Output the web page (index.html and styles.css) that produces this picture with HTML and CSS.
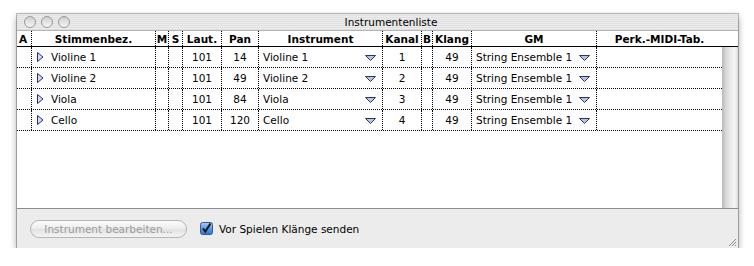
FILE: index.html
```html
<!DOCTYPE html>
<html lang="de">
<head>
    <meta charset="UTF-8">
    <title>Instrumentenliste</title>
    <link rel="stylesheet" href="styles.css">
</head>
<body>
    <div class="window">
        <div class="titlebar">
            <div class="lights">
                <span class="light"></span>
                <span class="light"></span>
                <span class="light"></span>
            </div>
            <div class="title">Instrumentenliste</div>
        </div>

        <div class="row head">
            <div class="cell c-a">A</div>
            <div class="cell c-name">Stimmenbez.</div>
            <div class="cell c-m">M</div>
            <div class="cell c-s">S</div>
            <div class="cell c-vol">Laut.</div>
            <div class="cell c-pan">Pan</div>
            <div class="cell c-inst">Instrument</div>
            <div class="cell c-chan">Kanal</div>
            <div class="cell c-b">B</div>
            <div class="cell c-prog">Klang</div>
            <div class="cell c-gm">GM</div>
            <div class="cell c-perk">Perk.-MIDI-Tab.</div>
            <div class="cell c-corner"></div>
        </div>

        <div class="list">
            <div class="rows" id="rows"></div>
            <div class="scrollbar"></div>
        </div>

        <div class="bottombar">
            <button class="btn" disabled>Instrument bearbeiten...</button>
            <label class="check">
                <svg width="13" height="13" viewBox="0 0 13 13">
                    <defs>
                        <linearGradient id="cb" x1="0" y1="0" x2="0" y2="1">
                            <stop offset="0" stop-color="#a9cdf5"/>
                            <stop offset="0.5" stop-color="#5b9be6"/>
                            <stop offset="1" stop-color="#2f74d6"/>
                        </linearGradient>
                    </defs>
                    <rect x="0.5" y="0.5" width="12" height="12" rx="2" fill="url(#cb)" stroke="#3c5a86"/>
                    <path d="M3 6.5 L5.3 9.5 L10.5 1.5" fill="none" stroke="#111" stroke-width="2"/>
                </svg>
                <span>Vor Spielen Klänge senden</span>
            </label>
            <svg class="grip" width="10" height="10" viewBox="0 0 10 10">
                <path d="M9 2 L2 9 M9 5 L5 9 M9 8 L8 9" stroke="#888" stroke-width="1"/>
            </svg>
        </div>
    </div>

    <script>
        // Zeilen der Instrumentenliste
        const staves = [
            { name: 'Violine 1', vol: 101, pan: 14, inst: 'Violine 1', chan: 1, prog: 49, gm: 'String Ensemble 1' },
            { name: 'Violine 2', vol: 101, pan: 49, inst: 'Violine 2', chan: 2, prog: 49, gm: 'String Ensemble 1' },
            { name: 'Viola', vol: 101, pan: 84, inst: 'Viola', chan: 3, prog: 49, gm: 'String Ensemble 1' },
            { name: 'Cello', vol: 101, pan: 120, inst: 'Cello', chan: 4, prog: 49, gm: 'String Ensemble 1' }
        ];

        const disclosure = '<svg class="tri" width="7" height="10" viewBox="0 0 7 10"><path d="M0.5 0.5 L6 5 L0.5 9.5 Z" fill="#d5dcf5" stroke="#2a2a6a"/></svg>';
        const popup = '<svg class="pop" width="11" height="6" viewBox="0 0 11 6"><path d="M0.5 0.5 L10.5 0.5 L5.5 5.5 Z" fill="#b7c3ee" stroke="#333355"/></svg>';

        const rows = document.getElementById('rows');
        staves.forEach(s => {
            const row = document.createElement('div');
            row.className = 'row';
            row.innerHTML =
                '<div class="cell c-a"></div>' +
                '<div class="cell c-name">' + disclosure + '<span>' + s.name + '</span></div>' +
                '<div class="cell c-m"></div>' +
                '<div class="cell c-s"></div>' +
                '<div class="cell c-vol num">' + s.vol + '</div>' +
                '<div class="cell c-pan num">' + s.pan + '</div>' +
                '<div class="cell c-inst menu"><span>' + s.inst + '</span>' + popup + '</div>' +
                '<div class="cell c-chan num">' + s.chan + '</div>' +
                '<div class="cell c-b"></div>' +
                '<div class="cell c-prog num">' + s.prog + '</div>' +
                '<div class="cell c-gm menu"><span>' + s.gm + '</span>' + popup + '</div>' +
                '<div class="cell c-perk"></div>';
            rows.appendChild(row);
        });
    </script>
</body>
</html>
```

FILE: styles.css
```css
body {
    margin: 0;
    background-color: #fff;
    font-family: 'DejaVu Sans', sans-serif;
    font-size: 10.5px;
    color: #000;
}

.window {
    margin: 14px 0 0 17px;
    width: 721px;
    height: 234px;
    display: flex;
    flex-direction: column;
    background-color: #fff;
    box-shadow: 0 0 0 1px rgba(0, 0, 0, 0.25), 0 3px 7px rgba(0, 0, 0, 0.4);
}

.titlebar {
    height: 16px;
    display: flex;
    align-items: center;
    border-bottom: 1px solid #b4b4b4;
    background: repeating-linear-gradient(to bottom, #ececec 0, #ececec 1px, #e0e0e0 1px, #e0e0e0 2px);
}

.lights {
    display: flex;
    gap: 5px;
    padding-left: 7px;
    width: 290px;
}

.light {
    width: 12px;
    height: 12px;
    border-radius: 50%;
    border: 1px solid #9a9a9a;
    background: linear-gradient(#cfcfcf, #f6f6f6);
    box-sizing: border-box;
}

.title {
    width: 154px;
    text-align: center;
    font-size: 10.5px;
}

.row {
    display: flex;
    height: 20px;
    border-bottom: 1px dotted #000;
}

.row.head {
    height: 15px;
    border-bottom: 1px solid #000;
    font-weight: bold;
}

.cell {
    box-sizing: border-box;
    border-right: 1px dotted #000;
    display: flex;
    align-items: center;
    justify-content: center;
    white-space: nowrap;
    overflow: hidden;
}

.c-a { width: 15px; justify-content: flex-start; padding-left: 2px; }
.c-name { width: 124px; }
.c-m { width: 13px; }
.c-s { width: 14px; }
.c-vol { width: 39px; }
.c-pan { width: 37px; }
.c-inst { width: 124px; }
.c-chan { width: 39px; }
.c-b { width: 11px; }
.c-prog { width: 39px; }
.c-gm { width: 125px; }
.c-perk { width: 125px; }
.c-corner { width: 16px; border-right: none; }
.head .c-perk { border-right: none; }

.rows .c-name {
    justify-content: flex-start;
    padding-left: 5px;
    gap: 7px;
}

.rows .c-perk { border-right: none; }

.menu {
    justify-content: space-between;
    padding: 0 6px 0 4px;
}

.pop { margin-top: 1px; }

.list {
    height: 161px;
    display: flex;
}

.rows {
    width: 705px;
}

.scrollbar {
    width: 16px;
    background: linear-gradient(to right, #b9b9b9, #d8d8d8 25%, #ececec 55%, #f6f6f6 80%, #dcdcdc);
}

.bottombar {
    flex: 1;
    display: flex;
    align-items: center;
    padding: 0 0 0 13px;
    border-top: 1px solid #8c8c8c;
    background-color: #ececec;
    position: relative;
}

.btn {
    width: 157px;
    height: 18px;
    border: 1px solid #b5b5b5;
    border-radius: 9px;
    background: linear-gradient(#fbfbfb, #ececec 50%, #e2e2e2 51%, #f4f4f4);
    color: #9a9a9a;
    font-family: 'DejaVu Sans', sans-serif;
    font-size: 10.5px;
    padding: 0;
    margin-right: 13px;
}

.check {
    display: flex;
    align-items: center;
    gap: 6px;
}

.grip {
    position: absolute;
    right: 1px;
    bottom: 1px;
}
```
